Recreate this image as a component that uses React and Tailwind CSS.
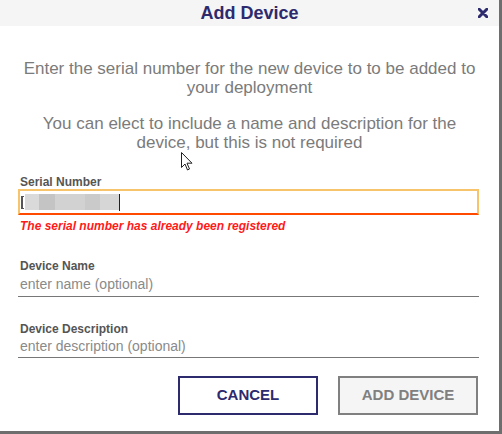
import React from "react";

export default function App() {
  return (
    <div className="relative w-[502px] h-[434px] box-border bg-white border-r-[3px] border-b-[3px] border-[#6e6e6e] font-['Liberation_Sans',Arial,sans-serif] overflow-hidden">
      <div className="relative h-[26px] bg-[#f5f5f5] flex items-center justify-center">
        <span className="text-[18px] leading-[22px] font-bold text-[#2d2a6e]">Add Device</span>
        <svg className="absolute left-[478px] top-[8px]" width="10" height="10" viewBox="0 0 10 10">
          <path d="M1.2 1.2 L8.8 8.8 M8.8 1.2 L1.2 8.8" stroke="#2d2a6e" strokeWidth="3" strokeLinecap="round" />
        </svg>
      </div>

      <div className="pt-[33px] px-[20px] text-center text-[17px] leading-[19px] text-[#7b7b7b]">
        <p>Enter the serial number for the new device to to be added to your deployment</p>
        <p className="mt-[17px]">You can elect to include a name and description for the device, but this is not required</p>
      </div>

      <div className="pl-[18px] pr-[20px] mt-[24px]">
        <div className="pl-[2px] text-[12px] leading-[13px] font-bold text-[#555555]">Serial Number</div>
        <div className="h-[26px] box-border border-2 border-[#f7c36b] border-b-[#ff4a00] flex items-center pl-[1px]">
          <div className="flex items-center h-[16px]">
            <div className="w-[3px] h-[13px] border-l-2 border-y border-[#555] mr-[1px]" />
            <div className="w-[14px] h-[16px] bg-[#dadada]" />
            <div className="w-[16px] h-[16px] bg-[#c4c4c4]" />
            <div className="w-[30px] h-[16px] bg-[#d2d2d2]" />
            <div className="w-[15px] h-[16px] bg-[#cacaca]" />
            <div className="w-[19px] h-[16px] bg-[#d6d6d6]" />
            <div className="w-[1px] h-[17px] bg-[#222]" />
          </div>
        </div>
        <div className="mt-[4px] pl-[2px] text-[12px] leading-[14px] font-bold italic text-[#ff1a1a]">
          The serial number has already been registered
        </div>

        <div className="mt-[27px] pl-[2px] text-[12px] leading-[13px] font-bold text-[#555555]">Device Name</div>
        <div className="pt-[3px] pb-[4px] pl-[2px] text-[14px] leading-[16px] text-[#8a8a8a] border-b border-[#777777]">
          enter name (optional)
        </div>

        <div className="mt-[26px] pl-[2px] text-[12px] leading-[13px] font-bold text-[#555555]">Device Description</div>
        <div className="pt-[2px] pb-[3px] pl-[2px] text-[14px] leading-[16px] text-[#8a8a8a] border-b border-[#777777]">
          enter description (optional)
        </div>

        <div className="mt-[18px] flex justify-end gap-[20px] pr-[1px]">
          <button className="w-[140px] h-[39px] box-border border-2 border-[#2d2a6e] bg-white text-[15px] font-bold text-[#2d2a6e]">
            CANCEL
          </button>
          <button className="w-[140px] h-[39px] box-border border-2 border-[#808080] bg-[#f5f5f5] text-[15px] font-bold text-[#808080]">
            ADD DEVICE
          </button>
        </div>
      </div>

      <svg className="absolute left-[181px] top-[152px]" width="12" height="19" viewBox="0 0 12 19">
        <path d="M0.5 0.5 L0.5 15.5 L4 12 L6.5 18 L8.5 17 L6 11.2 L11 11.2 Z" fill="white" stroke="#222" strokeWidth="1" strokeLinejoin="miter" />
      </svg>
    </div>
  );
}
